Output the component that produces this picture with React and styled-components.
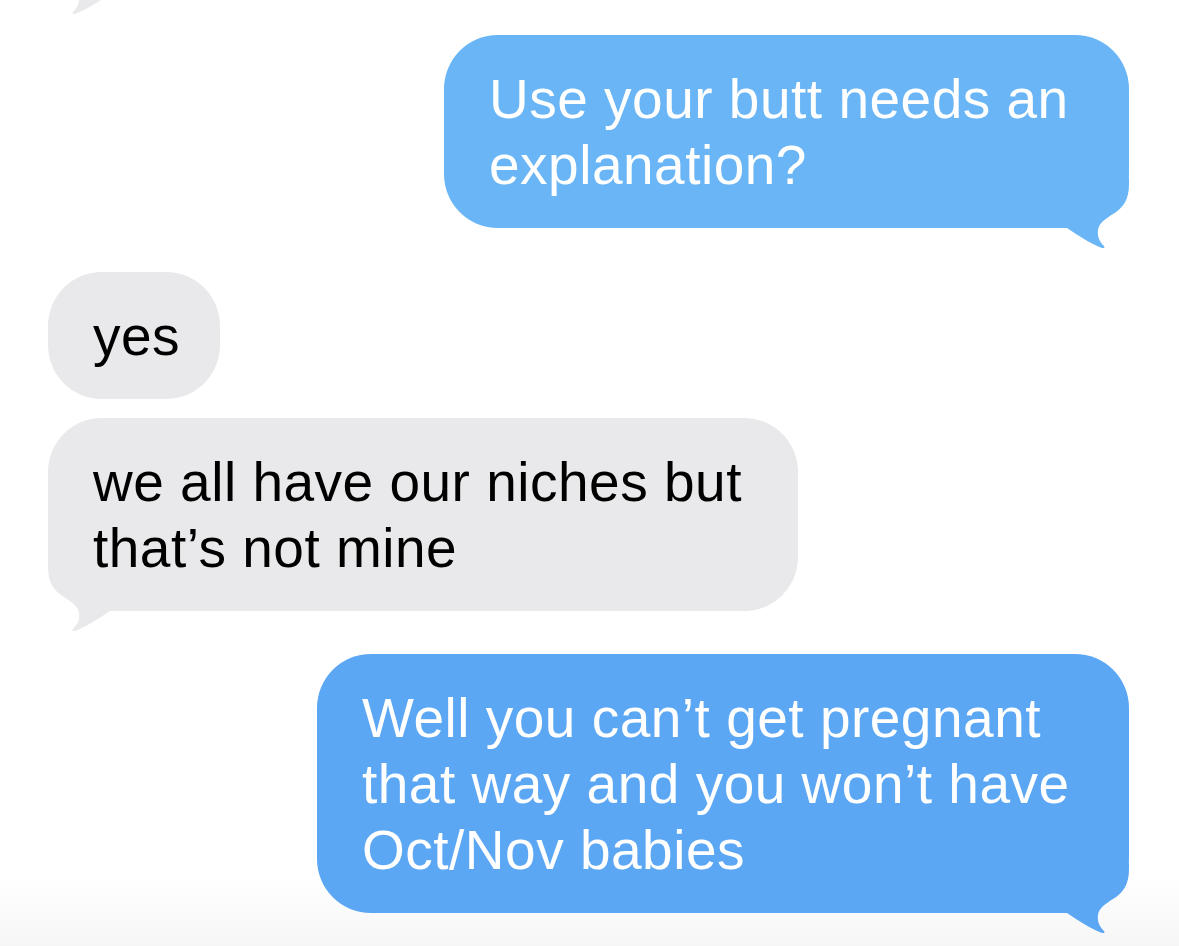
import React from 'react';
import styled, { createGlobalStyle } from 'styled-components';

// Page basics: white screen fading to light grey at the very bottom
const GlobalStyle = createGlobalStyle`
  html, body {
    margin: 0;
    padding: 0;
  }
  body {
    background: linear-gradient(to bottom, #ffffff 0px, #ffffff 880px, #f6f6f6 946px);
    font-family: 'Liberation Sans', Arial, sans-serif;
    overflow: hidden;
  }
`;

const TONES = {
  sky: '#69b5f5',
  blue: '#5ca7f4',
  grey: '#e9e9eb',
};

const Screen = styled.div`
  width: 1179px;
  height: 946px;
  overflow: hidden;
`;

const Thread = styled.div`
  display: flex;
  flex-direction: column;
  padding: 0 50px 0 48px;
`;

const Row = styled.div`
  display: flex;
  justify-content: ${(p) => (p.$mine ? 'flex-end' : 'flex-start')};
  margin-top: ${(p) => p.$gap}px;
`;

const Bubble = styled.div`
  position: relative;
  box-sizing: border-box;
  width: ${(p) => p.$width}px;
  min-height: ${(p) => p.$minHeight || 0}px;
  padding: 31px 40px 30px 45px;
  border-radius: 54px;
  background: ${(p) => TONES[p.$tone]};
  color: ${(p) => (p.$tone === 'grey' ? '#000000' : '#ffffff')};
  font-size: 55px;
  line-height: 66px;
  letter-spacing: 0.5px;
  white-space: nowrap;
`;

// text sits above the tail drawing
const Text = styled.span`
  position: relative;
  z-index: 1;
`;

const TailSvg = styled.svg`
  position: absolute;
  bottom: -20px;
  width: 70px;
  height: 70px;
  ${(p) => (p.$mine ? 'right: 0;' : 'left: 0; transform: scaleX(-1);')}
`;

function Tail({ mine, color }) {
  return (
    <TailSvg $mine={mine} viewBox="0 0 70 70">
      <path
        d="M0 0 H70 V6 C70 22 64 30 54 36 C46 41 40 45 39 52 C38 59 41 64 45 68 C46 70 45 71 43 70 C32 66 20 58 8 50 H0 Z"
        fill={color}
      />
    </TailSvg>
  );
}

function Message({ mine, tone, width, gap, tail, minHeight, children }) {
  return (
    <Row $mine={mine} $gap={gap}>
      <Bubble $tone={tone} $width={width} $minHeight={minHeight}>
        {tail && <Tail mine={mine} color={TONES[tone]} />}
        <Text>{children}</Text>
      </Bubble>
    </Row>
  );
}

export default function App() {
  return (
    <Screen>
      <GlobalStyle />
      <Thread>
        {/* previous message, scrolled off the top: only its tail shows */}
        <Message tone="grey" width={360} gap={-131} minHeight={125} tail />

        <Message mine tone="sky" width={685} gap={41} tail>
          Use your butt needs an
          <br />
          explanation?
        </Message>

        <Message tone="grey" width={172} gap={44}>
          yes
        </Message>

        <Message tone="grey" width={750} gap={19} tail>
          we all have our niches but
          <br />
          that’s not mine
        </Message>

        <Message mine tone="blue" width={812} gap={43} tail>
          Well you can’t get pregnant
          <br />
          that way and you won’t have
          <br />
          Oct/Nov babies
        </Message>
      </Thread>
    </Screen>
  );
}
